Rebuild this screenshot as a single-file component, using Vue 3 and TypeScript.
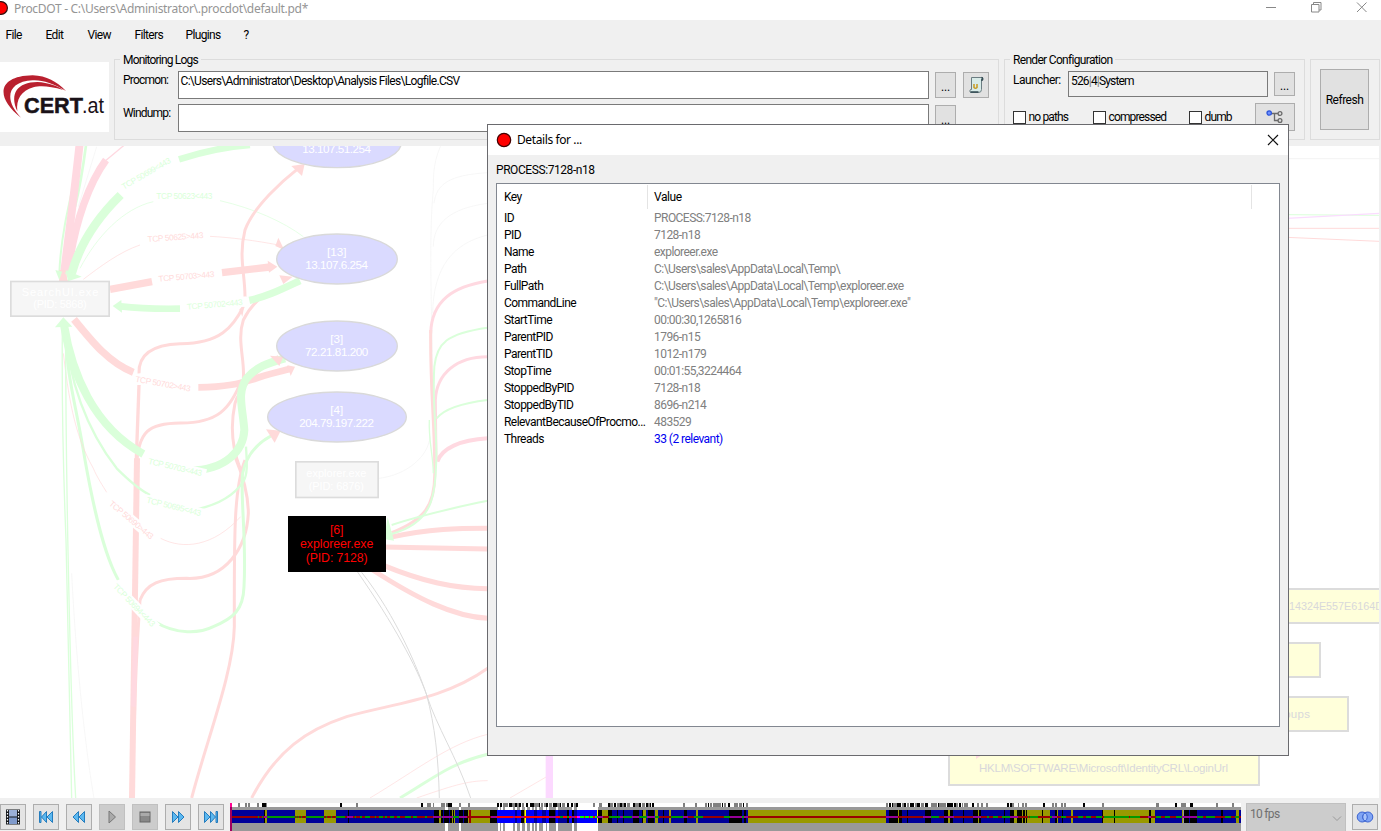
<script setup lang="ts">
type Span = [number, number, string]

const menus = [
  { label: 'File', width: 40 },
  { label: 'Edit', width: 42 },
  { label: 'View', width: 47 },
  { label: 'Filters', width: 51 },
  { label: 'Plugins', width: 58 },
  { label: '?', width: 20 },
]

const checks = [
  { label: 'no paths', width: 80 },
  { label: 'compressed', width: 96 },
  { label: 'dumb', width: 60 },
]

const details = [
  { key: 'ID', value: 'PROCESS:7128-n18' },
  { key: 'PID', value: '7128-n18' },
  { key: 'Name', value: 'exploreer.exe' },
  { key: 'Path', value: 'C:\\Users\\sales\\AppData\\Local\\Temp\\' },
  { key: 'FullPath', value: 'C:\\Users\\sales\\AppData\\Local\\Temp\\exploreer.exe' },
  { key: 'CommandLine', value: '"C:\\Users\\sales\\AppData\\Local\\Temp\\exploreer.exe"' },
  { key: 'StartTime', value: '00:00:30,1265816' },
  { key: 'ParentPID', value: '1796-n15' },
  { key: 'ParentTID', value: '1012-n179' },
  { key: 'StopTime', value: '00:01:55,3224464' },
  { key: 'StoppedByPID', value: '7128-n18' },
  { key: 'StoppedByTID', value: '8696-n214' },
  { key: 'RelevantBecauseOfProcmo...', value: '483529' },
  { key: 'Threads', value: '33 (2 relevant)', link: true },
]

const R = '#ffdada'
const P = '#ffd9e1'
const G = '#daffda'
const S = '#f3f3f3'

/* graph edges: colour, stroke width, path */
const edges: [string, number, string][] = [
  [S, 2, 'M1330 0C1300 60 1300 100 1300 150C1285 300 1296 500 1302 960'],
  [S, 2, 'M1463 98C1350 105 1310 130 1302 190'],
  [S, 2, 'M1463 190C1350 205 1300 250 1300 320'],
  [S, 2, 'M1463 285C1360 310 1300 380 1298 520'],
  [S, 2, 'M1137 1015C1220 1005 1285 950 1290 890'],
  [S, 2, 'M290 20L235 200'],
  [S, 2, 'M215 1300C230 1600 260 1850 282 1974'],
  [G, 6, 'M228 100C200 220 182 300 178 400'],
  [G, 8, 'M260 0C250 80 240 140 225 200'],
  [P, 24, 'M240 0C225 150 205 290 193 395'],
  [P, 22, 'M318 60C270 125 225 240 204 395'],
  [P, 4, 'M312 66L372 16'],
  [R, 22, 'M189 390L190 424'],
  [G, 20, 'M750 15C680 20 610 35 537 58'],
  [G, 26, 'M362 165C290 235 240 310 215 400'],
  [G, 2, 'M240 385C290 290 370 205 460 185'],
  [G, 2, 'M660 182C760 205 850 245 910 290'],
  [R, 2, 'M250 418C300 380 360 335 420 315'],
  [R, 2, 'M630 289C690 292 770 302 835 315'],
  [R, 22, 'M330 448L456 425'],
  [R, 22, 'M666 398L810 381'],
  [R, 9, 'M417 700C415 640 460 614 540 611C660 612 700 560 730 500'],
  [R, 9, 'M735 470C735 400 715 350 735 270C760 200 850 120 895 85'],
  [R, 9, 'M730 715C735 660 710 600 730 540C745 510 770 480 800 460'],
  [R, 9, 'M410 985C412 870 450 850 540 849C650 850 690 810 725 720'],
  [R, 9, 'M720 985C695 920 690 860 705 790C715 750 780 680 835 650'],
  [R, 9, 'M420 1380C440 1330 480 1315 560 1315C680 1320 740 1220 745 1120C745 1070 730 1010 705 950'],
  [R, 9, 'M735 960C700 1050 703 1200 703 1460C700 1600 620 1800 575 1974'],
  [R, 10, 'M417 735L408 985'],
  [R, 9, 'M420 1380C412 1500 405 1650 403 1750'],
  [R, 18, 'M411 955L396 1974'],
  [P, 14, 'M407 1490L400 1700'],
  [G, 20, 'M362 499C420 506 480 507 540 506'],
  [G, 22, 'M748 481C800 470 840 450 900 422'],
  [R, 22, 'M222 538C280 610 330 670 400 697'],
  [R, 20, 'M595 742C680 742 720 730 760 718C800 702 840 695 868 687'],
  [G, 24, 'M192 555C215 700 280 860 430 942'],
  [G, 24, 'M570 992C680 990 730 930 733 870C728 800 710 760 740 715C770 680 800 670 855 655'],
  [G, 9, 'M195 560C200 720 230 800 255 960C280 1100 310 1240 355 1320'],
  [G, 9, 'M465 1445C530 1485 600 1480 640 1460C700 1435 730 1410 732 1340C740 1200 720 1060 728 1000C740 940 780 900 835 877'],
  [G, 7, 'M195 560C205 720 260 870 350 985C380 1015 420 1050 450 1065'],
  [G, 7, 'M590 1108C650 1095 700 1070 730 1025C745 1000 740 960 738 920'],
  [R, 2, 'M190 640C205 760 220 880 280 985C290 1010 310 1040 320 1057'],
  [R, 2, 'M482 1195C550 1230 640 1220 722 1130'],
  [G, 4, 'M187 570C185 800 190 1000 198 1200C203 1500 210 1800 215 1974'],
  [G, 4, 'M197 570C197 800 200 1100 210 1500C215 1700 220 1850 227 1974'],
  [R, 9, 'M755 1974C830 1830 920 1770 1040 1730C1180 1690 1330 1680 1463 1585'],
  [R, 2, 'M1110 1974C1250 1890 1350 1810 1463 1783'],
  [G, 9, 'M1200 1974C1300 1915 1350 1870 1463 1843'],
  [R, 2, 'M1250 1974C1350 1940 1400 1922 1463 1922'],
  [R, 2, 'M1530 1974L1640 1910'],
  ['#fcd9ff', 22, 'M1648 1840L1648 1974'],
  ['#dcdcdc', 3, 'M1072 1295C1180 1450 1250 1580 1280 1665C1305 1760 1315 1850 1318 1974'],
  ['#dcdcdc', 3, 'M1085 1297C1190 1430 1255 1590 1280 1665C1310 1760 1370 1850 1412 1974'],
  [R, 15, 'M1165 1193C1290 1165 1380 1165 1463 1165'],
  [R, 15, 'M1150 1221L1463 1227'],
  [R, 15, 'M1150 1276C1270 1325 1360 1345 1463 1346'],
  [R, 15, 'M1118 1290C1250 1375 1360 1430 1463 1435'],
  [P, 9, 'M1463 423C1360 440 1295 480 1292 580'],
  [R, 9, 'M1292 570C1290 750 1305 850 1304 990C1308 1100 1270 1140 1175 1178'],
  [P, 9, 'M1463 650C1370 650 1310 700 1306 780L1308 960'],
  [P, 12, 'M1463 895C1380 900 1325 925 1312 965'],
  [G, 6, 'M1463 563C1340 580 1310 610 1303 680C1295 800 1315 900 1308 980C1305 1080 1290 1150 1175 1182'],
  [G, 6, 'M1463 780C1380 790 1330 810 1310 835'],
  [G, 4, 'M1288 840C1285 900 1300 950 1300 1000'],
  [G, 6, 'M1175 1155C1280 1120 1380 1100 1463 1082'],
  [G, 3, 'M3860 224L4137 226'],
  ['#fbdcff', 4, 'M3860 235L4137 220'],
  [R, 3, 'M3860 265L4137 265'],
  [R, 3, 'M3860 292L4137 304'],
  [S, 3, 'M3860 56L4137 56'],
]

const arrows: [string, string][] = [
  [G, '166,390 180,425 200,398'],
  [R, '176,425 205,425 190,385'],
  [G, '197,390 245,410 204,424'],
  [R, '835,293 853,330 826,318'],
  [R, '803,362 832,380 807,398'],
  [G, '338,498 364,480 366,518'],
  [R, '874,78 914,72 906,108'],
  [R, '838,406 878,410 850,432'],
  [R, '718,508 733,498 727,530'],
  [G, '165,562 190,532 217,560'],
  [R, '862,676 885,680 872,708'],
  [R, '810,647 850,650 838,678'],
  [R, '798,868 842,872 824,908'],
  [G, '1163,1132 1182,1202 1152,1197'],
]

const edgeLabels = [
  { t: 'TCP 50699<443', x: 442, y: 106, len: 165, rot: -30, c: G },
  { t: 'TCP 50623<443', x: 553, y: 176, len: 168, rot: 0, c: G },
  { t: 'TCP 50625>443', x: 527, y: 298, len: 168, rot: -4, c: R },
  { t: 'TCP 50703>443', x: 560, y: 416, len: 168, rot: -5, c: R },
  { t: 'TCP 50702<443', x: 645, y: 500, len: 168, rot: -5, c: G },
  { t: 'TCP 50702>443', x: 488, y: 738, len: 168, rot: 10, c: R },
  { t: 'TCP 50703<443', x: 524, y: 988, len: 165, rot: 13, c: G },
  { t: 'TCP 50695<443', x: 520, y: 1106, len: 168, rot: 14, c: G },
  { t: 'TCP 50690>443', x: 390, y: 1145, len: 165, rot: 40, c: R },
  { t: 'TCP 50694<443', x: 398, y: 1400, len: 168, rot: 46, c: G },
]

const hosts = [
  { cy: 8, rx: 195, n: '', ip: '13.107.51.254', len: 206 },
  { cy: 357, rx: 183, n: '[13]', ip: '13.107.6.254', len: 188 },
  { cy: 618, rx: 183, n: '[3]', ip: '72.21.81.200', len: 190 },
  { cy: 831, rx: 210, n: '[4]', ip: '204.79.197.222', len: 224 },
]

/* timeline: each list is placed from its own origin with its own units per pixel */
const N = '#000099'
const O = '#999900'
const K = '#000000'
const B = '#0000ff'
const Y = '#ffff00'
const D = '#990000'
const E = '#009900'
const V = '#990099'
const X = '#808080'

const place = (origin: number, unit: number, list: Span[]) =>
  list.map(([a, b, c]) => ({ x: origin - 230 + a / unit, w: (b - a) / unit, c }))

const band = [
  ...place(0, 3, [
    [690, 1262, N], [792, 796, K], [796, 801, O], [885, 918, O], [972, 1008, O], [1044, 1047, K],
  ]),
  ...place(420, 3, [
    [0, 42, N], [42, 57, K], [57, 63, O], [63, 96, K], [70, 73, N], [88, 91, N], [96, 98, O], [98, 102, K], [102, 105, O],
    [105, 117, N], [117, 144, K], [130, 133, N], [137, 139, N], [144, 210, O], [147, 153, D], [210, 232, K],
    [232, 531, B], [285, 290, N], [304, 312, K], [312, 314, O], [314, 318, Y], [341, 351, N], [365, 377, N],
    [388, 405, K], [405, 408, N], [414, 442, N], [442, 447, K], [456, 462, K], [462, 471, N], [531, 534, Y], [534, 546, K],
    [546, 564, O], [564, 669, N], [564, 576, K], [592, 594, K], [610, 612, K], [639, 657, K], [665, 669, K],
    [669, 678, O], [678, 705, N], [684, 701, K], [705, 714, O], [714, 747, N], [730, 732, K], [747, 753, O],
    [753, 828, N], [792, 801, K], [828, 834, O], [834, 927, N], [927, 966, K], [966, 984, N], [972, 978, K], [984, 1262, O],
  ]),
  ...place(840, 2.898, [
    [0, 133, O], [133, 142, N], [142, 168, K], [168, 172, O], [172, 180, K], [180, 246, N], [194, 197, K], [246, 264, K],
    [264, 300, N], [286, 288, K], [300, 312, K], [312, 318, O], [318, 328, K], [328, 384, N], [356, 359, K], [384, 400, K],
    [400, 403, O], [403, 409, K], [409, 493, N], [475, 477, K], [493, 504, K], [504, 513, O], [513, 528, K], [528, 531, O],
    [531, 536, K], [536, 609, O], [540, 542, K], [585, 588, K], [609, 622, N], [622, 629, K], [629, 632, O], [632, 670, N],
    [643, 645, K], [670, 675, O], [675, 760, N], [760, 762, K], [762, 912, O], [794, 797, K], [896, 901, K], [912, 992, N],
    [991, 994, O], [996, 1035, K], [1012, 1014, N], [1035, 1147, N], [1104, 1109, K], [1147, 1156, O], [1156, 1162, N],
  ]),
]

const track = [
  ...place(0, 3, [
    [690, 1262, D], [775, 778, E], [785, 789, E], [792, 801, V], [801, 885, E], [888, 891, E], [895, 898, E], [903, 906, E],
    [911, 913, E], [918, 972, E], [977, 980, E], [986, 988, E], [993, 996, E], [1001, 1003, E], [1008, 1036, E],
    [1040, 1060, V], [1066, 1069, E], [1080, 1085, E], [1096, 1110, E], [1124, 1128, E], [1136, 1148, E], [1156, 1160, E],
    [1170, 1182, E], [1192, 1200, E], [1214, 1232, E], [1240, 1250, E],
  ]),
  ...place(420, 3, [
    [0, 16, D], [16, 22, E], [22, 38, D], [38, 62, V], [62, 66, E], [66, 100, V], [100, 116, E], [116, 140, V], [140, 214, D],
    [214, 232, V], [232, 470, '#ff0000'], [278, 286, V], [304, 312, V], [388, 408, V], [420, 428, E], [440, 448, E],
    [454, 464, V], [470, 480, '#ff00ff'], [480, 531, '#00ff00'], [492, 494, '#ff0000'], [508, 511, '#ff0000'],
    [518, 524, '#ff0000'], [531, 550, V], [550, 566, D], [566, 600, E], [600, 610, V], [610, 636, E], [636, 656, V],
    [656, 680, E], [680, 704, V], [704, 718, E], [718, 752, D], [752, 790, E], [790, 804, V], [804, 822, D], [822, 848, E],
    [848, 912, D], [912, 930, E], [930, 966, V], [966, 972, E], [972, 984, V], [984, 1262, D],
  ]),
  ...place(840, 2.898, [
    [0, 133, D], [133, 168, V], [168, 180, D], [180, 240, D], [240, 264, V], [264, 288, E], [288, 300, D], [300, 330, V],
    [330, 384, D], [384, 409, V], [409, 425, D], [425, 432, E], [432, 442, D], [442, 458, E], [458, 470, D], [470, 493, E],
    [493, 515, V], [515, 545, D], [545, 575, E], [549, 552, D], [575, 609, D], [609, 614, E], [614, 630, V], [630, 640, D],
    [640, 655, E], [655, 690, D], [690, 703, E], [703, 712, D], [712, 728, E], [728, 742, D], [742, 760, E], [760, 766, D],
    [766, 870, E], [838, 841, D], [870, 892, D], [892, 902, V], [902, 915, D], [915, 930, E], [930, 942, D], [942, 956, E],
    [956, 975, D], [975, 990, E], [990, 1035, V], [1035, 1052, E], [1052, 1062, D], [1062, 1087, E], [1087, 1116, D],
    [1116, 1132, E], [1132, 1146, D], [1146, 1156, E], [1156, 1162, D],
  ]),
]

const ticks = [
  ...place(0, 3, [
    [714, 720, X], [735, 741, X], [743, 749, X], [771, 777, X], [786, 791, K], [792, 797, K], [797, 801, X],
    [1020, 1026, K], [1068, 1074, X],
  ]),
  ...place(420, 3, [
    [3, 9, K], [21, 33, X], [38, 43, X], [63, 75, X], [78, 84, X], [84, 96, K], [117, 123, X], [144, 150, X],
    [232, 237, K], [240, 246, K], [248, 264, X], [267, 276, K], [276, 284, X], [285, 291, K], [292, 296, X], [297, 303, K],
    [307, 312, X], [318, 323, K], [331, 341, K], [343, 356, X], [357, 361, K], [362, 369, X], [371, 377, X], [378, 384, K],
    [387, 396, X], [399, 410, K], [410, 420, X], [420, 424, K], [425, 434, X], [441, 448, K], [453, 460, K], [461, 467, X],
    [468, 474, K], [519, 525, X], [537, 546, X], [564, 570, K], [570, 580, X], [582, 588, K], [590, 600, X], [601, 606, K],
    [606, 612, X], [612, 617, K], [620, 630, X], [638, 644, K], [645, 656, X], [657, 663, K], [665, 676, X], [678, 684, K],
    [685, 689, X], [690, 694, K], [696, 702, K], [789, 795, X], [825, 831, X], [855, 861, X], [864, 868, K], [869, 876, X],
    [879, 890, X], [891, 904, X], [905, 910, K], [911, 918, X], [923, 930, K], [942, 954, X], [957, 966, X], [968, 973, K],
    [978, 984, X],
  ]),
  ...place(840, 2.898, [
    [133, 140, X], [142, 148, K], [151, 153, K], [154, 164, X], [165, 178, K], [180, 185, X], [186, 192, K], [194, 200, X],
    [203, 208, K], [210, 215, K], [217, 222, X], [223, 232, K], [235, 244, X], [246, 255, K], [264, 281, X], [284, 288, K],
    [288, 300, X], [300, 307, X], [309, 328, K], [330, 336, K], [337, 343, X], [345, 352, K], [353, 357, X], [359, 370, X],
    [383, 388, K], [397, 403, X], [408, 414, X], [422, 428, X], [484, 490, K], [492, 498, K], [498, 503, X], [515, 520, X],
    [527, 532, X], [536, 541, X], [588, 594, K], [614, 619, X], [623, 628, X], [641, 646, X], [649, 655, X], [704, 710, K],
    [759, 765, X], [916, 925, X], [971, 977, K], [988, 1003, X], [1014, 1023, K], [1090, 1096, X], [1136, 1142, X],
  ]),
]

/* visible range: white gaps through the grey lanes */
const gaps = place(420, 3, [
  [75, 84, ''], [117, 123, ''], [234, 240, ''], [243, 249, ''], [255, 279, ''], [285, 291, ''], [300, 306, ''],
  [316, 322, ''], [331, 335, ''], [341, 344, ''], [351, 357, ''], [369, 378, ''], [381, 387, ''], [408, 414, ''],
  [456, 462, ''], [471, 534, ''],
])
</script>

<template>
  <div class="app">
    <header class="titlebar">
      <svg class="dot" width="9" height="16"><circle cx="1" cy="8" r="6.400" fill="#f00" stroke="#301010" stroke-width="1.200" /></svg>
      <span class="title">ProcDOT - C:\Users\Administrator\.procdot\default.pd*</span>
      <svg class="winbtns" width="116" height="16" fill="none" stroke="#888" stroke-width="1">
        <path d="M1 7.500h10M46.500 4.500h7.500v7.500h-7.500zM48.500 4.500v-2h7.500v7.500h-2M92 2.500l9.500 9.500M101.500 2.500l-9.500 9.500" />
      </svg>
    </header>

    <nav class="menubar">
      <span v-for="m in menus" :key="m.label" class="menu" :style="{ width: m.width + 'px' }">{{ m.label }}</span>
    </nav>

    <section class="toolbar">
      <div class="logo">
        <svg width="109" height="70" viewBox="0 62 109 70">
          <g transform="scale(.33333)" fill="#b9202f">
            <path d="M63 353C-15 292 -8 228 98 226C140 227 170 245 198 273C160 250 125 239 98 241C20 245 12 300 63 353Z" />
            <path d="M52 334C28 280 52 247 112 246C145 248 172 257 190 270C150 258 120 256 100 262C64 272 48 298 52 334Z" />
          </g>
          <text x="24" y="113" font-size="22.500" font-weight="700" textLength="59" lengthAdjust="spacingAndGlyphs" fill="#1a1218" stroke="#1a1218" stroke-width=".5">CERT</text>
          <text x="82" y="113" font-size="21.500" textLength="22" lengthAdjust="spacingAndGlyphs" fill="#1a1218">.at</text>
        </svg>
      </div>

      <div class="group logs">
        <span class="legend tight">Monitoring Logs</span>
        <div class="row">
          <label class="lbl">Procmon:</label>
          <div class="field wide">C:\Users\Administrator\Desktop\Analysis Files\Logfile.CSV</div>
          <button class="btn dots">...</button>
          <button class="btn script">
            <svg width="16" height="18" viewBox="0 0 16 18">
              <path d="M3.500 1.500h11l-1 2v10q0 3-3 3H2.500q-1.500-1.500 0-3h1z" fill="#d8ebe8" stroke="#6b7d82" />
              <path d="M13.500 1.500q2 .5 1 2.500h-1.500M2.500 16h8" fill="none" stroke="#304850" stroke-width="1.300" />
              <path d="M6 8v3.500q1.500 1.500 3 0v-3.500" fill="none" stroke="#c79a20" stroke-width="1.500" />
            </svg>
          </button>
        </div>
        <div class="row second">
          <label class="lbl">Windump:</label>
          <div class="field wide"></div>
          <button class="btn dots">...</button>
        </div>
      </div>

      <div class="group render">
        <span class="legend">Render Configuration</span>
        <div class="row">
          <label class="lbl launch">Launcher:</label>
          <div class="field launcher">526<i>|</i>4<i>|</i>System</div>
          <button class="btn dots small">...</button>
        </div>
        <div class="row options">
          <label v-for="c in checks" :key="c.label" class="check" :style="{ width: c.width + 'px' }">
            <span class="box"></span>{{ c.label }}
          </label>
          <button class="btn tree">
            <svg width="18" height="16" viewBox="0 0 18 16" fill="none" stroke="#6a6a6a" stroke-width="1.300">
              <path d="M5 4.500h7M8.500 4.500v7h3.500" />
              <circle cx="3.200" cy="4" r="2.200" fill="#6f8fff" stroke="#2d55d8" />
              <circle cx="14" cy="4.500" r="1.900" />
              <circle cx="14" cy="11.500" r="1.900" />
            </svg>
          </button>
        </div>
      </div>

      <div class="group refresh"><button class="btn">Refresh</button></div>
    </section>

    <main class="canvas">
      <svg width="1379" height="652" viewBox="0 146 1379 652">
        <g transform="translate(0 140) scale(.33333)">
          <path v-for="(e, i) in edges" :key="i" :d="e[2]" :stroke="e[0]" :stroke-width="e[1]" fill="none" />
          <polygon v-for="(a, i) in arrows" :key="'a' + i" :points="a[1]" :fill="a[0]" />
          <g v-for="(l, i) in edgeLabels" :key="'l' + i" :transform="`translate(${l.x} ${l.y}) rotate(${l.rot})`">
            <rect :x="-l.len / 2 - 6" y="-22" :width="l.len + 18" height="30" fill="#fff" />
            <text :x="-l.len / 2" y="2" font-size="25" :textLength="l.len" :fill="l.c">{{ l.t }}</text>
          </g>

          <rect x="32.500" y="424.500" width="295" height="104" fill="#f6f6f6" stroke="#dcdcdc" stroke-width="5" />
          <g fill="#fff" font-size="33" text-anchor="middle">
            <text x="180" y="468" textLength="230">SearchUI.exe</text>
            <text x="180" y="505" textLength="160">(PID: 5868)</text>
          </g>

          <g v-for="h in hosts" :key="h.cy" fill="#fff" font-size="35" text-anchor="middle">
            <ellipse cx="1011" :cy="h.cy" :rx="h.rx - 2" ry="75" fill="#dadaff" stroke="#d9d9d9" stroke-width="4" />
            <text v-if="h.n" x="1010" :y="h.cy - 8">{{ h.n }}</text>
            <text x="1010" :y="h.cy + 30" :textLength="h.len">{{ h.ip }}</text>
          </g>

          <rect x="887.500" y="965.500" width="247" height="107" fill="#f6f6f6" stroke="#dcdcdc" stroke-width="5" />
          <g fill="#fff" font-size="33" text-anchor="middle">
            <text x="1009" y="1011" textLength="180">explorer.exe</text>
            <text x="1009" y="1050" textLength="166">(PID: 6876)</text>
          </g>

          <rect x="864" y="1128" width="294" height="168" fill="#000" />
          <g fill="#f00" font-size="37" text-anchor="middle">
            <text x="1010" y="1182" textLength="40">[6]</text>
            <text x="1010" y="1223" textLength="220">exploreer.exe</text>
            <text x="1010" y="1265" textLength="186">(PID: 7128)</text>
          </g>
        </g>

        <g fill="#ffffda" stroke="#dcdcdc" stroke-width="2">
          <rect x="1100" y="589" width="290" height="34" />
          <rect x="1100" y="643" width="220" height="34" />
          <rect x="1100" y="697" width="248" height="34" />
          <rect x="949" y="751" width="310" height="34" />
        </g>
        <path d="M976 755h6l-6 4z" fill="#ffd9e0" />
        <g fill="#d8d8da" font-size="11.500">
          <text x="1289" y="610" textLength="94" lengthAdjust="spacingAndGlyphs">14324E557E6164D</text>
          <text x="1280" y="718" textLength="30">roups</text>
          <text x="979" y="772" textLength="249">HKLM\SOFTWARE\Microsoft\IdentityCRL\LoginUrl</text>
        </g>
      </svg>
    </main>

    <footer class="player">
      <div class="controls">
        <button class="pbtn">
          <svg width="16" height="16" viewBox="0 0 16 16">
            <rect x="1" y=".5" width="14" height="15" fill="#15181c" />
            <rect x="4" y="1" width="8" height="6.500" fill="#9ab0d8" /><rect x="4" y="8.500" width="8" height="6.500" fill="#7f9acb" />
            <path d="M2.500 1v15M13.500 1v15" stroke="#fff" stroke-width="1.200" stroke-dasharray="1.500 1.500" />
          </svg>
        </button>
        <button class="pbtn">
          <svg width="16" height="16" viewBox="0 0 16 16" class="blue"><path d="M1.500 2.500h1.500v11h-1.500zM8.500 2.500v11L3.500 8zM14.500 2.500v11L9 8z" /></svg>
        </button>
        <button class="pbtn">
          <svg width="16" height="16" viewBox="0 0 16 16" class="blue"><path d="M7.500 2.500v11L2 8zM13.500 2.500v11L8 8z" /></svg>
        </button>
        <button class="pbtn off">
          <svg width="16" height="16" viewBox="0 0 16 16"><path d="M5 2l6.500 6-6.500 6z" fill="#aaa" stroke="#777" /></svg>
        </button>
        <button class="pbtn off">
          <svg width="16" height="16" viewBox="0 0 16 16"><rect x="3" y="3" width="10" height="10" fill="#888" stroke="#666" /><path d="M3.500 4h9v3h-9z" fill="#aaa" /></svg>
        </button>
        <button class="pbtn">
          <svg width="16" height="16" viewBox="0 0 16 16" class="blue"><path d="M2.500 2.500v11L8 8zM8.500 2.500v11L14 8z" /></svg>
        </button>
        <button class="pbtn">
          <svg width="16" height="16" viewBox="0 0 16 16" class="blue"><path d="M1.500 2.500v11L7 8zM7.500 2.500v11L12.500 8zM13 2.500h1.500v11h-1.500z" /></svg>
        </button>
      </div>

      <svg class="timeline" width="1011" height="28" shape-rendering="crispEdges">
        <rect width="1011" height="28" fill="#999" />
        <rect width="1011" height="4" fill="#fff" />
        <rect v-for="(g, i) in gaps" :key="'g' + i" :x="g.x" y="4" :width="g.w" height="24" fill="#fff" />
        <rect v-for="(b, i) in band" :key="'b' + i" :x="b.x" y="7" :width="b.w" height="13" :fill="b.c" />
        <rect v-for="(t, i) in track" :key="'t' + i" :x="t.x" y="13" :width="t.w" height="2" :fill="t.c" />
        <rect v-for="(t, i) in ticks" :key="'k' + i" :x="t.x" y="0" :width="t.w" height="4" :fill="t.c" />
        <rect width="2" height="4" fill="#ff0090" /><rect y="4" width="2" height="24" fill="#a00060" />
      </svg>

      <div class="fps">
        <span>10 fps</span>
        <svg width="10" height="6" fill="none" stroke="#999"><path d="M1 .5l4 4 4-4" /></svg>
      </div>
      <button class="pbtn loop">
        <svg width="18" height="14" viewBox="0 0 18 14" stroke="#3a62d0">
          <circle cx="6.200" cy="7" r="5" fill="#7fa4f4" /><circle cx="11.800" cy="7" r="5" fill="#7fa4f4" />
          <path d="M9 2.800a5 5 0 0 1 0 8.400a5 5 0 0 1 0-8.400z" fill="#a9c4fa" />
        </svg>
      </button>
    </footer>

    <div class="dialog">
      <div class="dlg-title">
        <svg width="16" height="16"><circle cx="8" cy="8" r="6.700" fill="#f00" stroke="#400" stroke-width="1.200" /></svg>
        <span>Details for ...</span>
        <svg class="close" width="12" height="12" stroke="#111" stroke-width="1.200"><path d="M1 1l10 10M11 1L1 11" /></svg>
      </div>
      <div class="dlg-body">
        <p class="subject">PROCESS:7128-n18</p>
        <div class="list">
          <div class="line head"><span class="key">Key</span><span class="value">Value</span></div>
          <div v-for="d in details" :key="d.key" class="line">
            <span class="key">{{ d.key }}</span>
            <span class="value" :class="{ link: d.link }">{{ d.value }}</span>
          </div>
        </div>
      </div>
    </div>
  </div>
</template>

<style>
body { margin: 0; overflow: hidden; }
</style>

<style scoped>
.app { position: relative; width: 1381px; height: 831px; overflow: hidden; display: flex; flex-direction: column; background: #f0f0f0; font: 12px/14px Roboto, "Liberation Sans", sans-serif; letter-spacing: -.54px; color: #000; box-sizing: border-box; }
.app *, .app *::before { box-sizing: border-box; }
button { padding: 0; margin: 0; font: inherit; letter-spacing: inherit; color: inherit; }
svg { display: block; flex: none; }
svg text { font-family: "Liberation Sans", Arial, sans-serif; letter-spacing: 0; }

.titlebar { height: 20px; flex: none; background: #fff; display: flex; align-items: flex-start; }
.title { margin-left: 5px; font: 12px/18px "Noto Sans", "Open Sans", sans-serif; letter-spacing: -.3px; color: #959595; white-space: nowrap; }
.winbtns { margin-left: auto; }

.menubar { height: 30px; flex: none; display: flex; padding: 8px 0 0 5.5px; }
.menu { letter-spacing: -.65px; }

.toolbar { height: 96px; flex: none; display: flex; align-items: flex-start; letter-spacing: -.68px; }
.logo { width: 109px; height: 70px; margin: 12px 5px 0 0; background: #fff; }
.group { height: 81px; margin-top: 9px; border: 1px solid #dcdcdc; padding: 11px 0 0 8px; display: flex; flex-direction: column; flex: none; }
.legend { height: 14px; margin: -18px 0 4px -3px; padding: 0 3px; background: #f0f0f0; align-self: flex-start; white-space: nowrap; }
.legend.tight { letter-spacing: -.82px; }
.logs { width: 885px; margin-right: 5px; }
.render { width: 301px; margin-right: 5px; }
.refresh { width: 70px; padding: 9px; }
.refresh .btn { width: 49px; height: 62px; letter-spacing: -.5px; }
.row { display: flex; height: 28px; flex: none; }
.row.second { margin-top: 5px; }
.row .lbl { width: 55px; line-height: 18px; letter-spacing: -.8px; }
.row .launch { letter-spacing: -.54px; }
.field { border: 1px solid #7a7a7a; background: #fff; padding: 2px; white-space: nowrap; }
.field.wide { width: 751px; height: 28px; padding-left: 1.5px; }
.field.launcher { width: 200px; height: 26px; background: #f0f0f0; padding: 2px; letter-spacing: -.85px; }
.field i { font-style: normal; font-weight: 700; color: #8a8a84; }
.btn { background: #e1e1e1; border: 1px solid #adadad; display: flex; align-items: center; justify-content: center; }
.btn.dots { width: 21px; height: 26px; margin: 1px 0 0 6px; padding-top: 4px; letter-spacing: -.1px; }
.btn.small { height: 24px; }
.btn.script { width: 26px; height: 26px; margin: 1px 0 0 7px; }
.options { margin-top: 4px; height: 28px; align-items: center; }
.check { display: flex; align-items: center; white-space: nowrap; letter-spacing: -.85px; }
.check .box { width: 13px; height: 13px; border: 1px solid #333; background: #fff; margin-right: 2.5px; }
.btn.tree { width: 40px; height: 28px; margin-left: 6px; }

.canvas { width: 1379px; height: 652px; flex: none; background: #fff; overflow: hidden; }

.player { height: 33px; flex: none; display: flex; padding-top: 5px; align-items: flex-start; }
.controls { display: flex; gap: 7px; width: 230px; padding-top: 1px; }
.pbtn { width: 26px; height: 26px; border: 1px solid #adadad; background: #e4e4e4; display: flex; align-items: center; justify-content: center; flex: none; }
.pbtn.off { background: #ccc; border-color: #c0c0c0; }
.blue { fill: #5cb8f0; stroke: #1673b8; stroke-width: .9; }
.fps { width: 100px; height: 29px; margin: 0 6px 0 5px; background: #ccc; border: 1px solid #c0c0c0; display: flex; justify-content: space-between; padding: 3px 3px 4px; color: #707070; letter-spacing: -.7px; }
.fps svg { margin-top: 9px; }
.loop { margin-top: 1px; }

.dialog { position: absolute; left: 487px; top: 124px; width: 802px; height: 632px; border: 1px solid #6a6a6e; background: #f0f0f0; display: flex; flex-direction: column; }
.dlg-title { height: 30px; flex: none; background: #fff; display: flex; align-items: center; padding: 0 9px 0 8px; font: 12px/16px "Noto Sans", sans-serif; letter-spacing: -.4px; }
.dlg-title span { margin-left: 5px; }
.close { margin-left: auto; }
.dlg-body { flex: 1; display: flex; flex-direction: column; padding: 8px 8px 28px; }
.subject { margin: 0 0 6px; height: 14px; letter-spacing: -.42px; }
.list { flex: 1; background: #fff; border: 1px solid #828790; padding-top: 1px; }
.line { display: flex; height: 17px; align-items: center; padding-left: 7px; white-space: nowrap; }
.key { width: 150px; }
.value { color: #808080; }
.link { color: #0000f0; }
.head { height: 24px; align-items: stretch; line-height: 24px; width: 755px; border-right: 1px solid #e4e4e4; }
.head .key { width: 144px; border-right: 1px solid #e4e4e4; }
.head .value { color: #000; margin-left: 6px; letter-spacing: -.4px; }
</style>
